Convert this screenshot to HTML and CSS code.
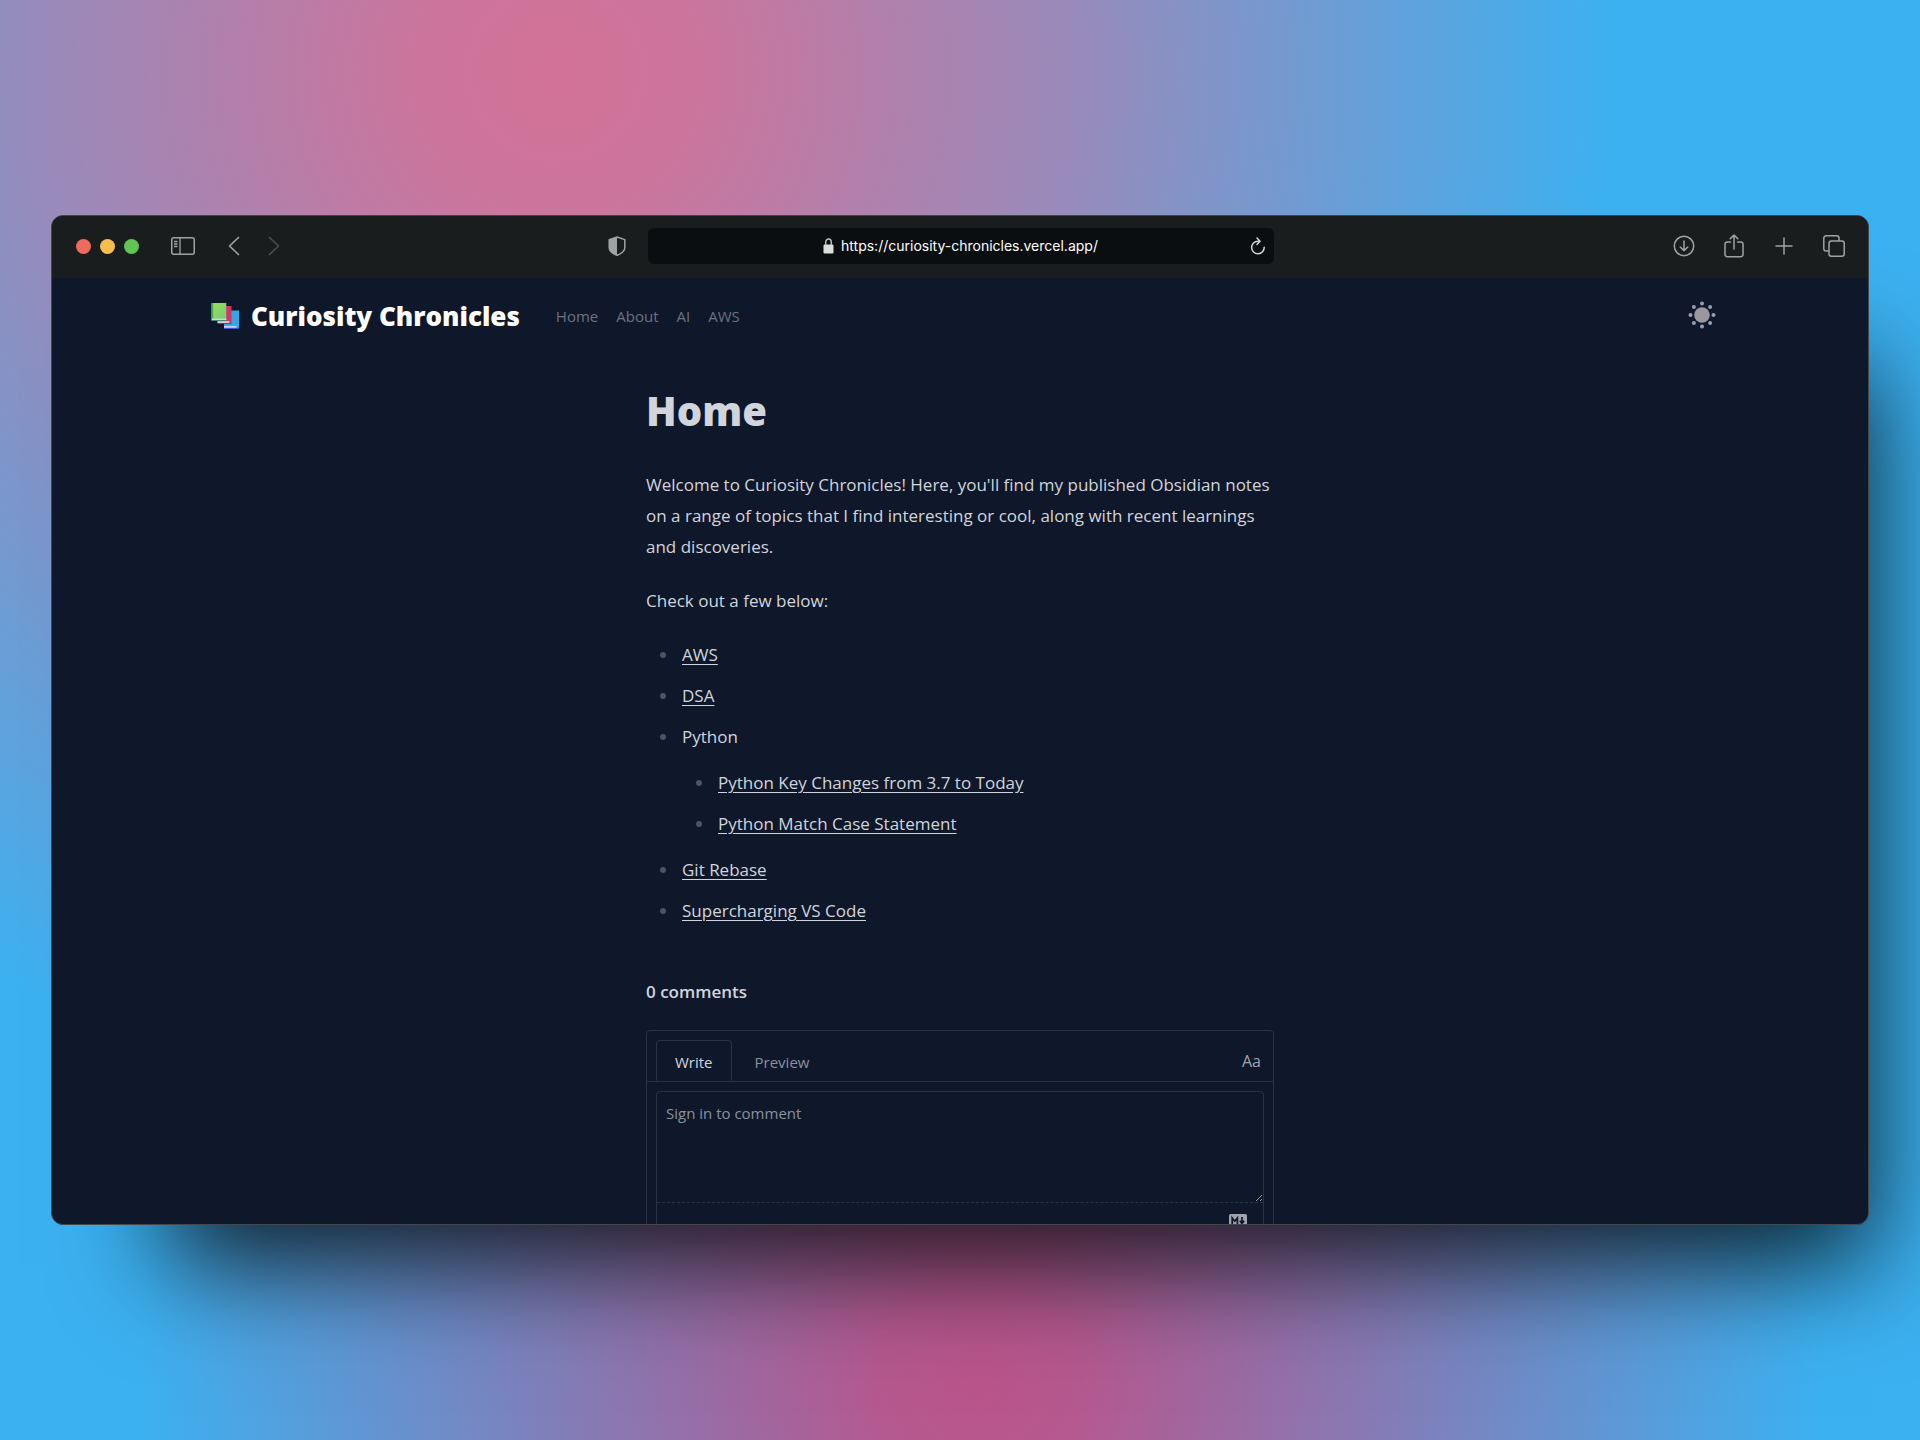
FILE: index.html
```html
<!DOCTYPE html>
<html lang="en">
<head>
<meta charset="utf-8">
<meta name="viewport" content="width=device-width, initial-scale=1">
<title>Curiosity Chronicles</title>
<link rel="stylesheet" href="styles.css">
</head>
<body>
<div class="window">
  <header class="toolbar">
    <div class="toolbar-left">
      <div class="lights">
        <span class="light light-red"></span>
        <span class="light light-yellow"></span>
        <span class="light light-green"></span>
      </div>
      <button class="tool" type="button" aria-label="Show sidebar">
        <svg width="24" height="18" viewBox="0 0 24 18" fill="none" stroke="currentColor" stroke-width="1.5"><rect x=".75" y=".75" width="22.5" height="16.5" rx="2"/><path d="M9 1v16M3 4.5h3.5M3 7h3.5M3 9.500h3.500" stroke-width="1.300"/></svg>
      </button>
      <div class="history">
        <button class="tool" type="button" aria-label="Back">
          <svg width="14" height="20" viewBox="-1 0 14 20" fill="none" stroke="currentColor" stroke-width="1.700" stroke-linecap="round" stroke-linejoin="round"><path d="M10.500 1.500 1.500 10l9 8.500"/></svg>
        </button>
        <button class="tool tool-off" type="button" aria-label="Forward" disabled>
          <svg width="14" height="20" viewBox="-1 0 14 20" fill="none" stroke="currentColor" stroke-width="1.700" stroke-linecap="round" stroke-linejoin="round"><path d="m1.500 1.500 9 8.500-9 8.500"/></svg>
        </button>
      </div>
      <button class="tool shield" type="button" aria-label="Privacy report">
        <svg width="18" height="20" viewBox="0 0 18 20"><path d="M9 1 1.200 3.600v8.200C1.200 15.500 4.500 17.700 9 19.300c4.500-1.600 7.800-3.800 7.800-7.500V3.600z" fill="none" stroke="currentColor" stroke-width="1.500" stroke-linejoin="round"/><path d="M9 1 1.200 3.600v8.200C1.200 15.500 4.500 17.700 9 19.300z" fill="currentColor"/></svg>
      </button>
    </div>
    <div class="address">
      <div class="address-text">
        <svg width="11" height="16" viewBox="0 0 11 16"><rect x=".5" y="6.500" width="10" height="9" rx="1.300" fill="#dcdddd"/><path d="M2.700 7V4.200a2.800 3.100 0 0 1 5.600 0V7" fill="none" stroke="#b9bbbc" stroke-width="1.500"/></svg>
        <span>https://curiosity-chronicles.vercel.app/</span>
      </div>
      <button class="tool reload" type="button" aria-label="Reload">
        <svg width="16" height="20" viewBox="0 0 16 20" fill="none" stroke="currentColor" stroke-width="1.500" stroke-linecap="round" stroke-linejoin="round"><path d="M14.200 11.200A6.300 6.300 0 1 1 8 5.200h1.500"/><path d="m7 2 3 3.200L7 8.400"/></svg>
      </button>
    </div>
    <div class="toolbar-right">
      <button class="tool" type="button" aria-label="Downloads">
        <svg width="22" height="22" viewBox="0 0 22 22" fill="none" stroke="currentColor" stroke-width="1.500" stroke-linecap="round" stroke-linejoin="round"><circle cx="11" cy="11" r="9.700"/><path d="M11 6v9.500M7.200 12l3.800 3.600 3.800-3.600"/></svg>
      </button>
      <button class="tool" type="button" aria-label="Share">
        <svg width="22" height="24" viewBox="0 0 22 24" fill="none" stroke="currentColor" stroke-width="1.500" stroke-linecap="round" stroke-linejoin="round"><path d="M7.500 8H4.200A2.200 2.200 0 0 0 2 10.200v10.300a2.200 2.200 0 0 0 2.200 2.200h13.600a2.200 2.200 0 0 0 2.200-2.200V10.200A2.200 2.200 0 0 0 17.800 8h-3.300M11 15V1.200M7.200 4.800 11 1.100l3.800 3.700"/></svg>
      </button>
      <button class="tool" type="button" aria-label="New tab">
        <svg width="22" height="22" viewBox="0 0 22 22" fill="none" stroke="currentColor" stroke-width="1.500" stroke-linecap="round"><path d="M11 3v16M3 11h16"/></svg>
      </button>
      <button class="tool" type="button" aria-label="Show tabs">
        <svg width="22" height="22" viewBox="0 0 22 22" fill="none" stroke="currentColor" stroke-width="1.500" stroke-linejoin="round"><rect x="6" y="6" width="15.200" height="15.200" rx="2.300"/><path d="M6 16H3.100A2.300 2.300 0 0 1 .8 13.700V3.100A2.300 2.300 0 0 1 3.100.8h10.600A2.300 2.300 0 0 1 16 3.100V6"/></svg>
      </button>
    </div>
  </header>
  <div class="page">
    <div class="masthead">
      <a class="brand" href="#">
        <svg width="28" height="26" viewBox="0 0 28 26">
          <defs><linearGradient id="leaf" x1="0" y1="0" x2="1" y2="1"><stop offset="0" stop-color="#9bdd55"/><stop offset="1" stop-color="#72cc80"/></linearGradient></defs>
          <path d="M13 7.500h15V26H13z" fill="#35a6e6"/><path d="M13 23.200h12.500v1.600H13z" fill="#e9e4fb"/><path d="M13 24.800h15V26H13z" fill="#3c58c4"/>
          <path d="M6.500 3H20.500v17.500h-14z" fill="#dc2f62"/><path d="M6.500 18.300h12v1.600h-12z" fill="#f6e3f3"/><path d="M6.500 19.900h14v1h-14z" fill="#b0205c"/>
          <path d="M.5 0h14.800v17.600H.5z" fill="url(#leaf)"/><path d="M.5 0h1.700v16H.5z" fill="#4ea35c"/><path d="M.8 15.700h14.500v1.200H.8z" fill="#d9efe0"/><path d="M.5 16.900h14.800v1H.5z" fill="#3c8a72"/>
        </svg>
        <span>Curiosity Chronicles</span>
      </a>
      <nav class="nav" aria-label="Main">
        <a href="#">Home</a>
        <a href="#">About</a>
        <a href="#">AI</a>
        <a href="#">AWS</a>
      </nav>
      <button class="theme" type="button" aria-label="Switch theme">
        <svg width="28" height="28" viewBox="0 0 28 28" fill="currentColor"><circle cx="14" cy="14" r="7.800"/><g fill="#9a9cb0"><circle cx="14" cy="2.500" r="2"/><circle cx="14" cy="25.500" r="2"/><circle cx="2.500" cy="14" r="2"/><circle cx="25.500" cy="14" r="2"/><circle cx="5.900" cy="5.900" r="2"/><circle cx="22.100" cy="5.900" r="2"/><circle cx="5.900" cy="22.100" r="2"/><circle cx="22.100" cy="22.100" r="2"/></g></svg>
      </button>
    </div>
    <main class="article">
      <h1>Home</h1>
      <p>Welcome to Curiosity Chronicles! Here, you'll find my published Obsidian notes on a range of topics that I find interesting or cool, along with recent learnings and discoveries.</p>
      <p>Check out a few below:</p>
      <ul>
        <li><a href="#">AWS</a></li>
        <li><a href="#">DSA</a></li>
        <li>Python
          <ul>
            <li><a href="#">Python Key Changes from 3.7 to Today</a></li>
            <li><a href="#">Python Match Case Statement</a></li>
          </ul>
        </li>
        <li><a href="#">Git Rebase</a></li>
        <li><a href="#">Supercharging VS Code</a></li>
      </ul>
      <section class="comments">
        <h2>0 comments</h2>
        <form class="editor">
          <div class="tabs">
            <button class="tab tab-active" type="button">Write</button>
            <button class="tab" type="button">Preview</button>
            <button class="font-toggle" type="button" aria-label="Use monospace font">Aa</button>
          </div>
          <div class="field">
            <textarea aria-label="Comment" placeholder="Sign in to comment"></textarea>
            <div class="field-foot">
              <a href="#" aria-label="Styling with Markdown is supported"><svg width="18" height="14" viewBox="0 0 18 14"><rect width="18" height="14" rx="1.500" fill="#9ea3ae"/><path d="M3.200 10V4l2.600 3.200L8.400 4v6M13 3v5.500M10.800 6.800l2.200 2.700 2.200-2.700" fill="none" stroke="#0f172a" stroke-width="1.700"/></svg></a>
            </div>
          </div>
        </form>
      </section>
    </main>
  </div>
</div>
</body>
</html>
```
FILE: styles.css
```css
* { box-sizing: border-box; }

body {
  margin: 0;
  height: 100vh;
  display: flex;
  padding: 215px 51px;
  overflow: hidden;
  font-family: "Open Sans", "Noto Sans", sans-serif;
  background:
    radial-gradient(circle 1060px at 29% 5%, rgba(216, 112, 149, .97), rgba(216, 112, 149, .93) 12%, rgba(216, 112, 149, .58) 50%, rgba(216, 112, 149, 0)),
    radial-gradient(circle 840px at 51% 96%, rgba(190, 82, 136, .97), rgba(190, 82, 136, .93) 12%, rgba(190, 82, 136, .54) 50%, rgba(190, 82, 136, 0)),
    #3cb1f1;
}

a { color: inherit; text-decoration: none; }
button { padding: 0; border: 0; background: none; color: inherit; font: inherit; }
svg { display: block; }

.window {
  flex: 1;
  display: flex;
  flex-direction: column;
  overflow: hidden;
  border: 1px solid #43484c;
  border-radius: 12px;
  background: #0f172a;
  box-shadow: 60px 96px 100px -56px rgba(0, 0, 0, .8);
}

.toolbar {
  display: grid;
  grid-template-columns: 1fr 626px 1fr;
  align-items: center;
  height: 62px;
  flex: none;
  padding: 0 23px 2px 24px;
  background: #1a1d1e;
  color: #a0a3a4;
}
.toolbar-left, .toolbar-right, .lights, .history { display: flex; align-items: center; }
.toolbar-left { gap: 32px; }
.lights { gap: 9px; }
.light { width: 15px; height: 15px; border-radius: 50%; }
.light-red { background: #ed6a5e; }
.light-yellow { background: #f5bf4f; }
.light-green { background: #61c554; }
.history { gap: 26px; }
.tool-off { color: #4a4d4f; }
.shield { margin: 0 22px 0 auto; }
.toolbar-right { justify-content: flex-end; gap: 28px; }
.address {
  display: grid;
  grid-template-columns: 24px 1fr 24px;
  align-items: center;
  height: 36px;
  border-radius: 6px;
  background: #0b0e10;
}
.address-text {
  grid-column: 2;
  display: flex;
  justify-content: center;
  align-items: center;
  gap: 7px;
  color: #fff;
  font: 14px/20px Inter, sans-serif;
}
.reload { color: #d3d5d6; }

.masthead {
  display: flex;
  align-items: center;
  height: 76px;
  padding: 0 152px 0 159px;
}
.brand {
  display: flex;
  align-items: center;
  gap: 12px;
  color: #fff;
  font-size: 26px;
  line-height: 36px;
  font-weight: 800;
}
.nav {
  display: flex;
  gap: 18px;
  margin-left: 36px;
  color: #6b7280;
  font-size: 15px;
  line-height: 24px;
}
.theme { margin-left: auto; padding-bottom: 2px; color: #9a979e; }

.article {
  max-width: 628px;
  margin: 0 auto;
  color: #d1d5db;
  font-size: 17px;
  line-height: 31px;
}
.article h1 { margin: 32px 0 33px; font-size: 40px; line-height: 50px; font-weight: 800; }
.article p { margin: 0 0 23px; }
.article ul { margin: 0; padding-left: 33px; list-style: disc; }
.article li { margin-bottom: 10px; padding-left: 3px; }
.article li::marker { color: #4b5563; }
.article li ul { margin: 15px 0; }
.article li a { text-decoration: underline; text-underline-offset: 3px; }

.comments h2 { margin: 53px 0 25px; font-size: 17px; line-height: 26px; font-weight: 600; }
.editor { border: 1px solid #2b3342; border-radius: 4px; line-height: 24px; font-size: 15px; }
.tabs { display: flex; gap: 4px; padding: 9px 9px 0; border-bottom: 1px solid #2b3342; color: #8b919d; }
.tab { height: 41px; padding: 2px 18px 0; border: 1px solid transparent; }
.tab-active { border-color: #2b3342; border-bottom-color: #0f172a; border-radius: 4px 4px 0 0; margin-bottom: -1px; color: #d1d5db; }
.font-toggle { margin-left: auto; padding-right: 3px; font-size: 16px; color: #9ea3ae; }
.field { margin: 9px; border: 1px solid #2b3342; border-radius: 4px; }
.field textarea {
  display: block;
  width: 100%;
  height: 111px;
  padding: 9px;
  border: 0;
  border-bottom: 1px dashed #2b3342;
  background: none;
  color: #d1d5db;
  font: inherit;
  resize: vertical;
}
.field textarea::placeholder { color: #8b919d; }
.field-foot { display: flex; justify-content: flex-end; padding: 11px 16px; }
```
